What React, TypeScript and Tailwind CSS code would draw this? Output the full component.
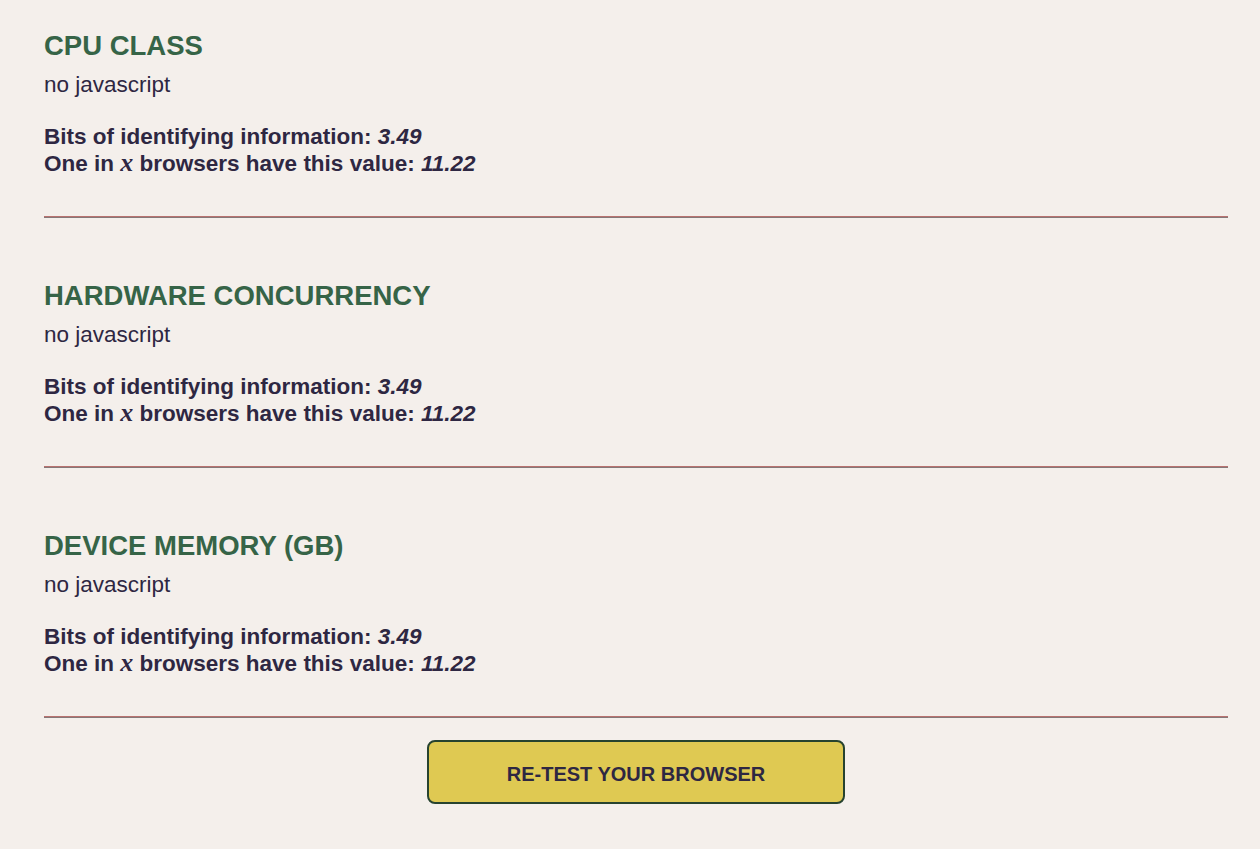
const sections = ['CPU CLASS', 'HARDWARE CONCURRENCY', 'DEVICE MEMORY (GB)']

function Section({ title }: { title: string }) {
  return (
    <section>
      <h2 className="text-[27.5px] leading-[31px] font-bold text-[#366447]">{title}</h2>
      <p className="mt-[11px] text-[22.5px] leading-[26px]">no javascript</p>
      <div className="mt-[26px] text-[22.5px] leading-[26px] font-bold">
        <div>
          Bits of identifying information: <i>3.49</i>
        </div>
        <div className="h-[26px]">
          One in{' '}
          <var className="font-['Liberation_Serif',serif] text-[26px] leading-none italic">x</var>{' '}
          browsers have this value: <i>11.22</i>
        </div>
      </div>
      <div className="mt-[40px] border-t border-b border-t-[#b87270] border-b-[#857878]" />
    </section>
  )
}

export default function App() {
  return (
    <div className="min-h-[849px] bg-[#f4efeb] text-[#2e2742] font-['Liberation_Sans',Arial,sans-serif]">
      <main className="pl-[44px] pr-[32px] pt-[30px] flex flex-col gap-[62px]">
        {sections.map((s) => (
          <Section key={s} title={s} />
        ))}
      </main>
      <div className="flex justify-center pt-[22px] pl-[12px]">
        <button className="w-[418px] h-[64px] pt-[3px] rounded-[8px] border-2 border-[#27432f] bg-[#dfc952] text-[20px] font-bold text-[#2e2742]">
          RE-TEST YOUR BROWSER
        </button>
      </div>
    </div>
  )
}
